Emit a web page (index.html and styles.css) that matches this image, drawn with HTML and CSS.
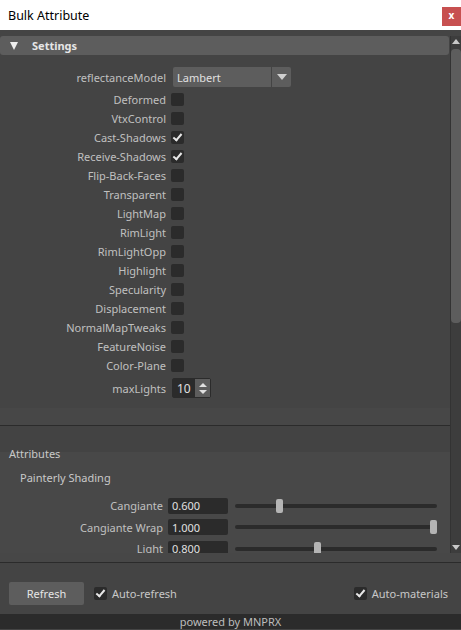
FILE: index.html
```html
<!DOCTYPE html>
<html>
<head>
<meta charset="utf-8">
<link rel="stylesheet" href="styles.css">
</head>
<body>
<div class="window">
  <div class="titlebar">
    <span class="title">Bulk Attribute</span>
    <span class="close">x</span>
  </div>
  <div class="main">
    <div class="scroll-area">
      <div class="section-header"><span class="tri"></span><span>Settings</span></div>
      <div class="form">
        <div class="row row-dd">
          <span class="lbl">reflectanceModel</span>
          <div class="dropdown"><span class="dd-text">Lambert</span><span class="dd-arrow"></span></div>
        </div>
        <div class="checks">
          <div class="row"><span class="lbl">Deformed</span><span class="cb"></span></div>
          <div class="row"><span class="lbl">VtxControl</span><span class="cb"></span></div>
          <div class="row"><span class="lbl">Cast-Shadows</span><span class="cb checked"></span></div>
          <div class="row"><span class="lbl">Receive-Shadows</span><span class="cb checked"></span></div>
          <div class="row"><span class="lbl">Flip-Back-Faces</span><span class="cb"></span></div>
          <div class="row"><span class="lbl">Transparent</span><span class="cb"></span></div>
          <div class="row"><span class="lbl">LightMap</span><span class="cb"></span></div>
          <div class="row"><span class="lbl">RimLight</span><span class="cb"></span></div>
          <div class="row"><span class="lbl">RimLightOpp</span><span class="cb"></span></div>
          <div class="row"><span class="lbl">Highlight</span><span class="cb"></span></div>
          <div class="row"><span class="lbl">Specularity</span><span class="cb"></span></div>
          <div class="row"><span class="lbl">Displacement</span><span class="cb"></span></div>
          <div class="row"><span class="lbl">NormalMapTweaks</span><span class="cb"></span></div>
          <div class="row"><span class="lbl">FeatureNoise</span><span class="cb"></span></div>
          <div class="row"><span class="lbl">Color-Plane</span><span class="cb"></span></div>
        </div>
        <div class="row row-spin">
          <span class="lbl">maxLights</span>
          <div class="spin"><span class="spin-val">10</span><span class="spin-btns"><span class="up"></span><span class="down"></span></span></div>
        </div>
      </div>
      <div class="band"></div>
      <div class="divider"></div>
      <div class="attr-gap"></div>
      <div class="attr">
        <div class="attr-title">Attributes</div>
        <div class="group-title">Painterly Shading</div>
        <div class="slider-row">
          <span class="slbl">Cangiante</span>
          <span class="field">0.600</span>
          <div class="track"><span class="handle" style="left: 41px"></span></div>
        </div>
        <div class="slider-row">
          <span class="slbl">Cangiante Wrap</span>
          <span class="field">1.000</span>
          <div class="track"><span class="handle" style="left: 195px"></span></div>
        </div>
        <div class="slider-row">
          <span class="slbl">Light</span>
          <span class="field">0.800</span>
          <div class="track"><span class="handle" style="left: 79px"></span></div>
        </div>
      </div>
    </div>
    <div class="scrollbar">
      <span class="sb-up"></span>
      <div class="sb-track"><span class="sb-thumb"></span></div>
      <span class="sb-down"></span>
    </div>
  </div>
  <div class="under"></div>
  <div class="bottom">
    <span class="btn">Refresh</span>
    <span class="cb checked"></span><span class="blbl">Auto-refresh</span>
    <span class="spacer"></span>
    <span class="cb checked"></span><span class="blbl">Auto-materials</span>
  </div>
  <div class="footer">powered by MNPRX</div>
</div>
</body>
</html>
```

FILE: styles.css
```css
* { box-sizing: border-box; }
html, body { margin: 0; padding: 0; }
body {
  width: 461px;
  height: 630px;
  overflow: hidden;
  background: #444444;
  font-family: "Noto Sans", "Open Sans", sans-serif;
  font-size: 11px;
  color: #c0c0c0;
}
.window { display: flex; flex-direction: column; height: 630px; }

.titlebar {
  height: 30px;
  background: #ffffff;
  display: flex;
  align-items: center;
  justify-content: space-between;
  padding-left: 8px;
  flex: none;
}
.title { color: #000; font-size: 12.5px; font-family: "Noto Sans", sans-serif; }
.close {
  width: 19px;
  height: 19px;
  background: #c75050;
  color: #fff;
  font-weight: bold;
  font-size: 10px;
  display: flex;
  align-items: center;
  justify-content: center;
  line-height: 1;
  padding-bottom: 2px;
  margin-top: 2px;
}

.main { display: flex; height: 523px; flex: none; padding-top: 6px; }
.scroll-area { width: 450px; overflow: hidden; display: flex; flex-direction: column; }

.section-header {
  height: 19px;
  width: 449px;
  background: #5d5d5d;
  border-radius: 3px;
  display: flex;
  align-items: center;
  color: #e6e6e6;
  font-weight: bold;
  font-size: 11px;
  flex: none;
}
.tri {
  width: 0; height: 0;
  border-left: 4px solid transparent;
  border-right: 4px solid transparent;
  border-top: 8px solid #eeeeee;
  margin-left: 10px;
  margin-right: 14px;
}

.form { padding-top: 12px; padding-bottom: 10px; flex: none; }
.row { display: flex; align-items: center; height: 19px; }
.lbl { width: 171px; text-align: right; padding-right: 5px; white-space: nowrap; flex: none; }
.row-dd { height: 20px; margin-bottom: 3px; }
.row-spin { height: 20px; margin-top: 3px; }

.dropdown { display: flex; height: 20px; width: 118px; gap: 1px; margin-left: 2px; }
.dd-text { flex: 1; background: #5d5d5d; border-radius: 2px 0 0 2px; color: #e0e0e0; padding-left: 4px; display: flex; align-items: center; }
.dd-arrow { width: 19px; background: #5d5d5d; border-radius: 0 2px 2px 0; display: flex; align-items: center; justify-content: center; }
.dd-arrow::after { content: ""; border-left: 5px solid transparent; border-right: 5px solid transparent; border-top: 6px solid #d0d0d0; }

.cb {
  width: 13px; height: 13px;
  background: #2b2b2b;
  border-radius: 2px;
  display: inline-block;
  position: relative;
  flex: none;
}
.cb.checked::after {
  content: "";
  position: absolute;
  left: 4px; top: 1px;
  width: 3px; height: 7px;
  border-right: 2px solid #e8e8e8;
  border-bottom: 2px solid #e8e8e8;
  transform: rotate(40deg);
}

.spin { display: flex; height: 20px; border: 1px solid #2b2b2b; border-radius: 2px; margin-left: 1px; }
.spin-val { width: 22px; background: #2b2b2b; color: #e0e0e0; display: flex; align-items: center; padding-left: 4px; font-size: 12px; }
.spin-btns { width: 15px; background: #5d5d5d; display: flex; flex-direction: column; justify-content: center; align-items: center; gap: 3px; }
.up { border-left: 4px solid transparent; border-right: 4px solid transparent; border-bottom: 4px solid #e0e0e0; }
.down { border-left: 4px solid transparent; border-right: 4px solid transparent; border-top: 4px solid #e0e0e0; }

.band { height: 17px; background: #474747; flex: none; }
.divider { height: 1px; background: #2b2b2b; flex: none; }
.attr-gap { height: 26px; background: #434343; flex: none; }
.attr { background: #484848; flex: 1; }
.attr-title { height: 1px; position: relative; top: -6px; padding-left: 9px; color: #c8c8c8; }
.group-title { padding-left: 20px; padding-top: 17px; height: 42px; color: #c8c8c8; }
.slider-row { display: flex; align-items: center; height: 21.5px; }
.slbl { width: 168px; text-align: right; padding-right: 5px; white-space: nowrap; flex: none; }
.field { width: 60px; height: 16px; background: #2b2b2b; color: #e0e0e0; border-radius: 2px; padding-left: 4px; display: flex; align-items: center; flex: none; }
.track { position: relative; margin-left: 7px; width: 202px; height: 4px; background: #2b2b2b; border-radius: 2px; flex: none; }
.handle { position: absolute; top: -5px; width: 7px; height: 14px; background: #b4b4b4; border-radius: 2px; }

.scrollbar { width: 11px; display: flex; flex-direction: column; background: #3d3d3d; border-left: 1px solid #333; }
.sb-up, .sb-down { height: 11px; display: flex; align-items: center; justify-content: center; flex: none; }
.sb-up::after { content: ""; border-left: 4px solid transparent; border-right: 4px solid transparent; border-bottom: 5px solid #c8c8c8; }
.sb-down::after { content: ""; border-left: 4px solid transparent; border-right: 4px solid transparent; border-top: 5px solid #c8c8c8; }
.sb-track { flex: 1; padding-top: 2px; }
.sb-thumb { display: block; height: 274px; background: #5d5d5d; border-radius: 4px; }

.under { height: 10px; background: #474747; border-bottom: 1px solid #2b2b2b; flex: none; }
.bottom { height: 51px; display: flex; align-items: center; padding-left: 9px; padding-right: 13px; padding-top: 10px; flex: none; }
.btn { width: 75px; height: 23px; background: #5d5d5d; color: #e6e6e6; border-radius: 2px; display: flex; align-items: center; justify-content: center; margin-right: 10px; }
.blbl { margin-left: 5px; color: #c8c8c8; }
.spacer { flex: 1; }
.footer { height: 15px; background: #2b2b2b; color: #bdbdbd; text-align: center; line-height: 15px; flex: none; }
```
